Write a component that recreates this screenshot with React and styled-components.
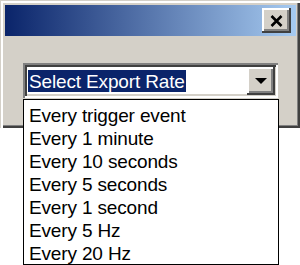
import React from 'react';
import styled, { createGlobalStyle, css } from 'styled-components';

const GlobalStyle = createGlobalStyle`
  html, body {
    margin: 0;
    padding: 0;
    background: #ffffff;
  }
  body {
    font-family: "Liberation Sans", Arial, sans-serif;
  }
`;

const raised = css`
  background: #d4d0c8;
  box-shadow:
    inset -2px -2px #404040,
    inset 2px 2px #ffffff,
    inset -4px -4px #808080;
`;

const sunken = css`
  box-shadow:
    inset 2px 2px #808080,
    inset -2px -2px #ffffff,
    inset 4px 4px #404040,
    inset -4px -4px #d4d0c8;
`;

const Page = styled.div`
  width: 300px;
  height: 265px;
  overflow: hidden;
  background: #ffffff;
`;

const Window = styled.div`
  position: relative;
  box-sizing: border-box;
  width: 300px;
  height: 128px;
  padding: 5px 4px 0 5px;
  display: flex;
  flex-direction: column;
  background: #d4d0c8;
  box-shadow:
    inset 1px 1px #d4d0c8,
    inset 3px 3px #ffffff,
    inset -2px -2px #404040,
    inset -3px -3px #808080;
`;

const TitleBar = styled.div`
  height: 31px;
  display: flex;
  align-items: center;
  justify-content: flex-end;
  padding-right: 5px;
  background: linear-gradient(to right, #0a246a 0%, #a6caf0 100%);
`;

const CloseButton = styled.div`
  ${raised};
  width: 29px;
  height: 25px;
  display: flex;
  align-items: center;
  justify-content: center;
`;

const Content = styled.div`
  padding: 27px 0 0 18px;
`;

const ComboWrap = styled.div`
  position: relative;
  width: 255px;
`;

const Combo = styled.div`
  ${sunken};
  box-sizing: border-box;
  height: 35px;
  padding: 4px 3px 4px 5px;
  display: flex;
  align-items: center;
  background: #ffffff;
`;

const Selected = styled.span`
  height: 22px;
  box-sizing: border-box;
  padding: 1px 1px 0 1px;
  background: #0a246a;
  color: #ffffff;
  font-size: 19px;
  letter-spacing: -0.15px;
  white-space: nowrap;
`;

const DropButton = styled.div`
  ${raised};
  margin-left: auto;
  width: 28px;
  height: 28px;
  display: flex;
  align-items: center;
  justify-content: center;
`;

const DropList = styled.ul`
  position: absolute;
  top: 36px;
  left: 0;
  z-index: 2;
  box-sizing: border-box;
  width: 256px;
  height: 166px;
  margin: 0;
  padding: 4px 0 0 5px;
  list-style: none;
  overflow: hidden;
  background: #ffffff;
  border: 1px solid #000000;
`;

const Option = styled.li`
  height: 23px;
  line-height: 23px;
  font-size: 19px;
  letter-spacing: -0.15px;
  color: #000000;
  white-space: nowrap;
`;

const rates = [
  'Every trigger event',
  'Every 1 minute',
  'Every 10 seconds',
  'Every 5 seconds',
  'Every 1 second',
  'Every 5 Hz',
  'Every 20 Hz',
];

const App = () => (
  <Page>
    <GlobalStyle />
    <Window>
      <TitleBar>
        <CloseButton>
          <svg width="13" height="12" viewBox="0 0 13 12">
            <path d="M1.5 1 L11.5 11 M11.5 1 L1.5 11" stroke="#000" strokeWidth="2.6" />
          </svg>
        </CloseButton>
      </TitleBar>
      <Content>
        <ComboWrap>
          <Combo>
            <Selected>Select Export Rate</Selected>
            <DropButton>
              <svg width="12" height="6" viewBox="0 0 12 6">
                <path d="M0 0 H12 L6 6 Z" fill="#000" />
              </svg>
            </DropButton>
          </Combo>
          <DropList>
            {rates.map((r) => (
              <Option key={r}>{r}</Option>
            ))}
          </DropList>
        </ComboWrap>
      </Content>
    </Window>
  </Page>
);

export default App;
